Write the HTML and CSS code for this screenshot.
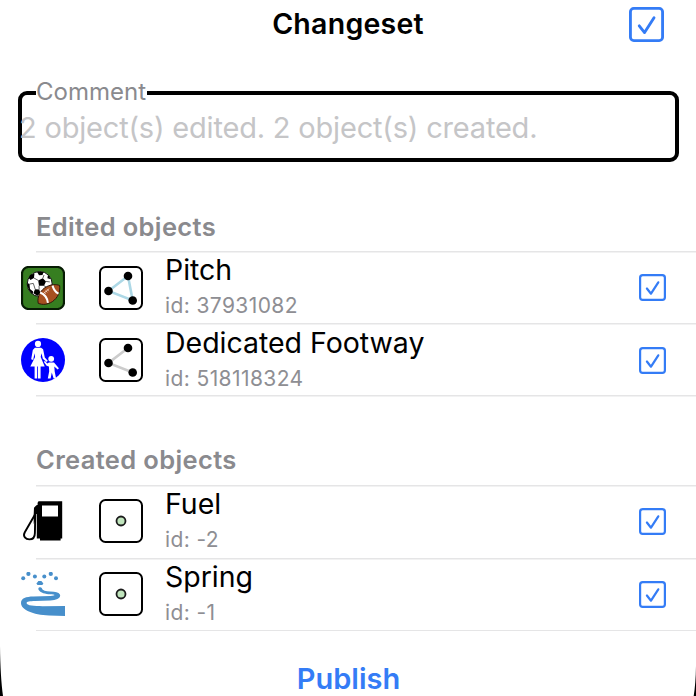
FILE: index.html
```
<!DOCTYPE html>
<html lang="en">
<head>
<meta charset="utf-8">
<title>Changeset</title>
<link rel="stylesheet" href="styles.css">
</head>
<body>
<svg class="defs" width="0" height="0" aria-hidden="true">
  <symbol id="check" viewBox="0 0 27 27">
    <rect x="1.1" y="1.1" width="24.8" height="24.8" rx="2.6" fill="none" stroke="#347cf6" stroke-width="2.2"/>
    <path d="M7.9 14.5l4.1 5.2 7.3-11.4" fill="none" stroke="#347cf6" stroke-width="2.2" stroke-linecap="round" stroke-linejoin="round"/>
  </symbol>
  <symbol id="node" viewBox="0 0 44 44">
    <rect x="1" y="1" width="42" height="42" rx="5.5" fill="#fff" stroke="#000" stroke-width="2"/>
    <circle cx="22" cy="22" r="4.5" fill="#c0e5bd" stroke="#1c1c1c" stroke-width="1.8"/>
  </symbol>
</svg>
<main class="screen">
  <header class="header">
    <h1 class="title">Changeset</h1>
    <svg class="check-all"><use href="#check"/></svg>
  </header>
  <fieldset class="comment">
    <legend class="legend">Comment</legend>
    <div class="placeholder">2 object(s) edited. 2 object(s) created.</div>
  </fieldset>

  <section class="group edited">
    <h2 class="heading">Edited objects</h2>
    <div class="row">
      <svg class="icon" viewBox="0 0 44 44">
        <rect x="1" y="1" width="42" height="42" rx="6.5" fill="#367e20" stroke="#071c04" stroke-width="2.2"/>
        <circle cx="18.7" cy="18" r="12.5" fill="#fff" stroke="#111" stroke-width="1"/>
        <path d="M16 5.7l6.5.2-1 3-3.5.4zM9 8.9l4.5-1.3-.6 4.3-3.4 2.2-1.8-2.1zM17.2 14.4l4.6-2.1 3.2 3.1-2 4.3-5 .1zM27 8.8l2.9 4.5-3.5-1zM6.3 17l2.2 1.1.5 5 3.1 2.5-.4 2.4C8 25.5 6.3 21 6.3 17zM14 23.2l4.2.2 1.3 3.8-3.1 2.6-4-2.6zM26.7 22l3.8-3.5.5 2.4-2.3 3z" fill="#000"/>
        <path d="M13 12l4.2 2.4M23 9l-1.2 3.3M8.5 18.1l3.8-.7 1.9 5.8M18 19.8l.2 3.6M25 15.4l3.8.5M23 19.7l3.7 2.3" fill="none" stroke="#222" stroke-width=".7"/>
        <path d="M17.2 37.3c-1.3-6.7 2.4-13.4 8.2-16.5 4.7-2.5 9.8-2.7 13.2-1.3 1 6-1.9 12.5-7.2 16.1-4.8 3.1-9.8 3.5-14.2 1.7z" fill="#a65020" stroke="#32160a" stroke-width="1"/>
        <path d="M19.1 26.5c4.3 1.7 7.2 5.1 7.8 10.4" fill="none" stroke="#fff" stroke-width="2"/>
        <path d="M31.5 19.6c1.2 4.1 3 6.5 6 8.1" fill="none" stroke="#fff" stroke-width="2"/>
        <path d="M22.6 27.3l5.7-4.7M23.2 25.8l1.5 1.9M24.7 24.5l1.5 1.9M26.2 23.3l1.5 1.9" stroke="#f5d9ca" stroke-width=".8"/>
      </svg>
      <svg class="geometry" viewBox="0 0 44 44">
        <rect x="1" y="1" width="42" height="42" rx="5.5" fill="#fff" stroke="#000" stroke-width="2"/>
        <path d="M9.5 25l19.5-15 4.7 24.5z" fill="none" stroke="#add8e6" stroke-width="2.6"/>
        <circle cx="9.5" cy="25" r="4.3"/><circle cx="29" cy="10" r="4.3"/><circle cx="33.7" cy="34.5" r="4.3"/>
      </svg>
      <div class="info"><div class="name">Pitch</div><div class="id">id: 37931082</div></div>
      <svg class="check"><use href="#check"/></svg>
    </div>
    <div class="row">
      <svg class="icon" viewBox="0 0 44 44">
        <circle cx="22" cy="22" r="22" fill="#00f"/>
        <g fill="#fff">
          <circle cx="17" cy="5.9" r="3.1"/>
          <path d="M13.9 9.8h6.2l2 1.5 1.7 8.3 3 3.1-1.1 1.3-3.9-3.3-1.3-5.4-.8 3.6 4 9.6h-4.1v12h-2.6v-12h-.8v12h-2.6v-12H9.3l4.8-9.6-.6-3.6-1.3 6.6-2-.6 1.6-9.2z"/>
          <circle cx="30.2" cy="20.8" r="2.9"/>
          <path d="M28 24.6h5l4.9 5.7-1.2 1.3-3.4-3.1.4 5.1 1.4 6.9h-2.5l-1.8-6-1.2 6h-2.8l1.4-7.2-.3-4.8-2.3-.8-2.8-4 1.3-.8 2.1 2.7z"/>
        </g>
      </svg>
      <svg class="geometry" viewBox="0 0 44 44">
        <rect x="1" y="1" width="42" height="42" rx="5.5" fill="#fff" stroke="#000" stroke-width="2"/>
        <path d="M29 10L9.5 25l24.2 9.5" fill="none" stroke="#ccc" stroke-width="2.6"/>
        <circle cx="9.5" cy="25" r="4.3"/><circle cx="29" cy="10" r="4.3"/><circle cx="33.7" cy="34.5" r="4.3"/>
      </svg>
      <div class="info"><div class="name">Dedicated Footway</div><div class="id">id: 518118324</div></div>
      <svg class="check"><use href="#check"/></svg>
    </div>
  </section>

  <section class="group created">
    <h2 class="heading">Created objects</h2>
    <div class="row">
      <svg class="icon" viewBox="0 0 44 44">
        <path fill-rule="evenodd" d="M17.5 2.3h23.7v37.1h-1.6v2H19v-2h-3.2V15h-1l-.2 6-1.9 4v-9.5l.3-6.7 2.4-2.6 1.2-.2V3.8zM21 6.4v11h16v-11z"/>
        <path d="M14.3 15L3.8 33.3c-2.4 4.3 1 7.1 4.6 7.1 4.3 0 5.5-2.4 5.5-6.4z" fill="none" stroke="#000" stroke-width="1.9" stroke-linejoin="round"/>
      </svg>
      <svg class="geometry"><use href="#node"/></svg>
      <div class="info"><div class="name">Fuel</div><div class="id">id: -2</div></div>
      <svg class="check"><use href="#check"/></svg>
    </div>
    <div class="row">
      <svg class="icon" viewBox="0 0 44 44">
        <g fill="#478fcb">
          <circle cx="2.2" cy="6.3" r="2"/><circle cx="7.4" cy="1.9" r="2.1"/><circle cx="13.9" cy="4.5" r="2"/><circle cx="23.3" cy="4.5" r="2"/><circle cx="29.8" cy="1.9" r="2.1"/><circle cx="35" cy="6.3" r="2"/>
          <path d="M17.4 9h3l2 2.6-1.1 1.4h-4.8l-1.1-1.4z"/>
          <path d="M18.8 15.3c1.9-.2 2.1 1.1 2.7 2.1 2.4 2.1 6.3 1.9 11.3 2.3 4.1.5 6.4 1.8 6.4 3.8 0 3-4.2 4.7-9.9 5l-15.2.6C8.8 29.3 5.6 29.7 5.6 31c0 2.7 7.9 3 15.9 3.2L44 34.1V44l-16-.5C12 42.8 0 37.9 0 31c0-4.8 5.1-6.4 12.3-6.5l17.2-.6c2.9-.2 4-.3 4-.8 0-.6-1.8-.7-4-.9-5.4-.4-9.7-1.2-11.8-4.3-.8-1.2-.3-2.5 1.1-2.6z"/>
        </g>
      </svg>
      <svg class="geometry"><use href="#node"/></svg>
      <div class="info"><div class="name">Spring</div><div class="id">id: -1</div></div>
      <svg class="check"><use href="#check"/></svg>
    </div>
  </section>
  <footer class="footer">Publish</footer>
  <svg class="corners" viewBox="0 0 696 56"><path d="M0 6C.2 27 1.3 43 3 56H0zM696 26c-.2 12-1 22-2.3 30h2.3z"/></svg>
</main>
</body>
</html>
```
FILE: styles.css
```
* { box-sizing: border-box; }
body { margin: 0; background: #fff; font-family: Inter, "Liberation Sans", sans-serif; color: #000; }
svg { display: block; flex: none; }
.defs { position: absolute; }
.screen { position: relative; height: 696px; overflow: hidden; display: flex; flex-direction: column; }
.header { flex: none; height: 48px; display: grid; grid-template-columns: 1fr auto 1fr; align-items: center; padding: 0 32px; }
.title { grid-column: 2; margin: 0; font-size: 28.5px; line-height: 34px; font-weight: 600; letter-spacing: .25px; }
.check-all { justify-self: end; width: 35px; height: 35px; }
.comment { margin: 33px 17px 0 18px; height: 81px; padding: 0; border: 4px solid #000; border-radius: 9px; min-width: 0; flex: none; }
.legend { margin-left: 14px; padding: 0; height: 24px; width: 111px; line-height: 22px; font-size: 24px; color: #8a8a8e; white-space: nowrap; }
.placeholder { height: 44px; line-height: 46px; margin-left: -3px; font-size: 29px; letter-spacing: -.19px; color: #c5c5c7; white-space: nowrap; }
.group { flex: none; padding-top: 39.5px; }
.heading { margin: 0; height: 49px; padding-left: 36px; line-height: 49px; font-size: 25.5px; font-weight: 600; letter-spacing: .36px; color: #8a8a8e; }
.created .heading { line-height: 48px; }
.row { height: 72.5px; display: flex; align-items: center; padding: 1.5px 30px 0 21px; background: linear-gradient(#e5e5e6, #e5e5e6) 36px 0 / 100% 1.5px no-repeat; }
.row:last-child { height: 73.5px; padding-bottom: 1px; background: linear-gradient(#e5e5e6, #e5e5e6) 36px 0 / 100% 1.5px no-repeat, linear-gradient(#e5e5e6, #e5e5e6) 36px 100% / 100% 1.5px no-repeat; }
.created .row { padding-top: 0; padding-bottom: 0; }
.icon { width: 44px; height: 44px; }
.geometry { width: 44px; height: 44px; margin-left: 34px; }
.info { flex: 1; margin-left: 22px; white-space: nowrap; }
.name { font-size: 28.5px; line-height: 36px; letter-spacing: -.02px; }
.id { font-size: 21px; line-height: 35px; letter-spacing: .4px; color: #8e8e93; }
.check { width: 27px; height: 27px; }
.footer { flex: 1 0 0; min-height: 0; display: flex; justify-content: center; padding: 30px 0 0 1px; color: #347cf6; font-size: 29px; line-height: 36px; font-weight: 600; }
.corners { position: absolute; left: 0; bottom: 0; width: 696px; height: 56px; }
```
